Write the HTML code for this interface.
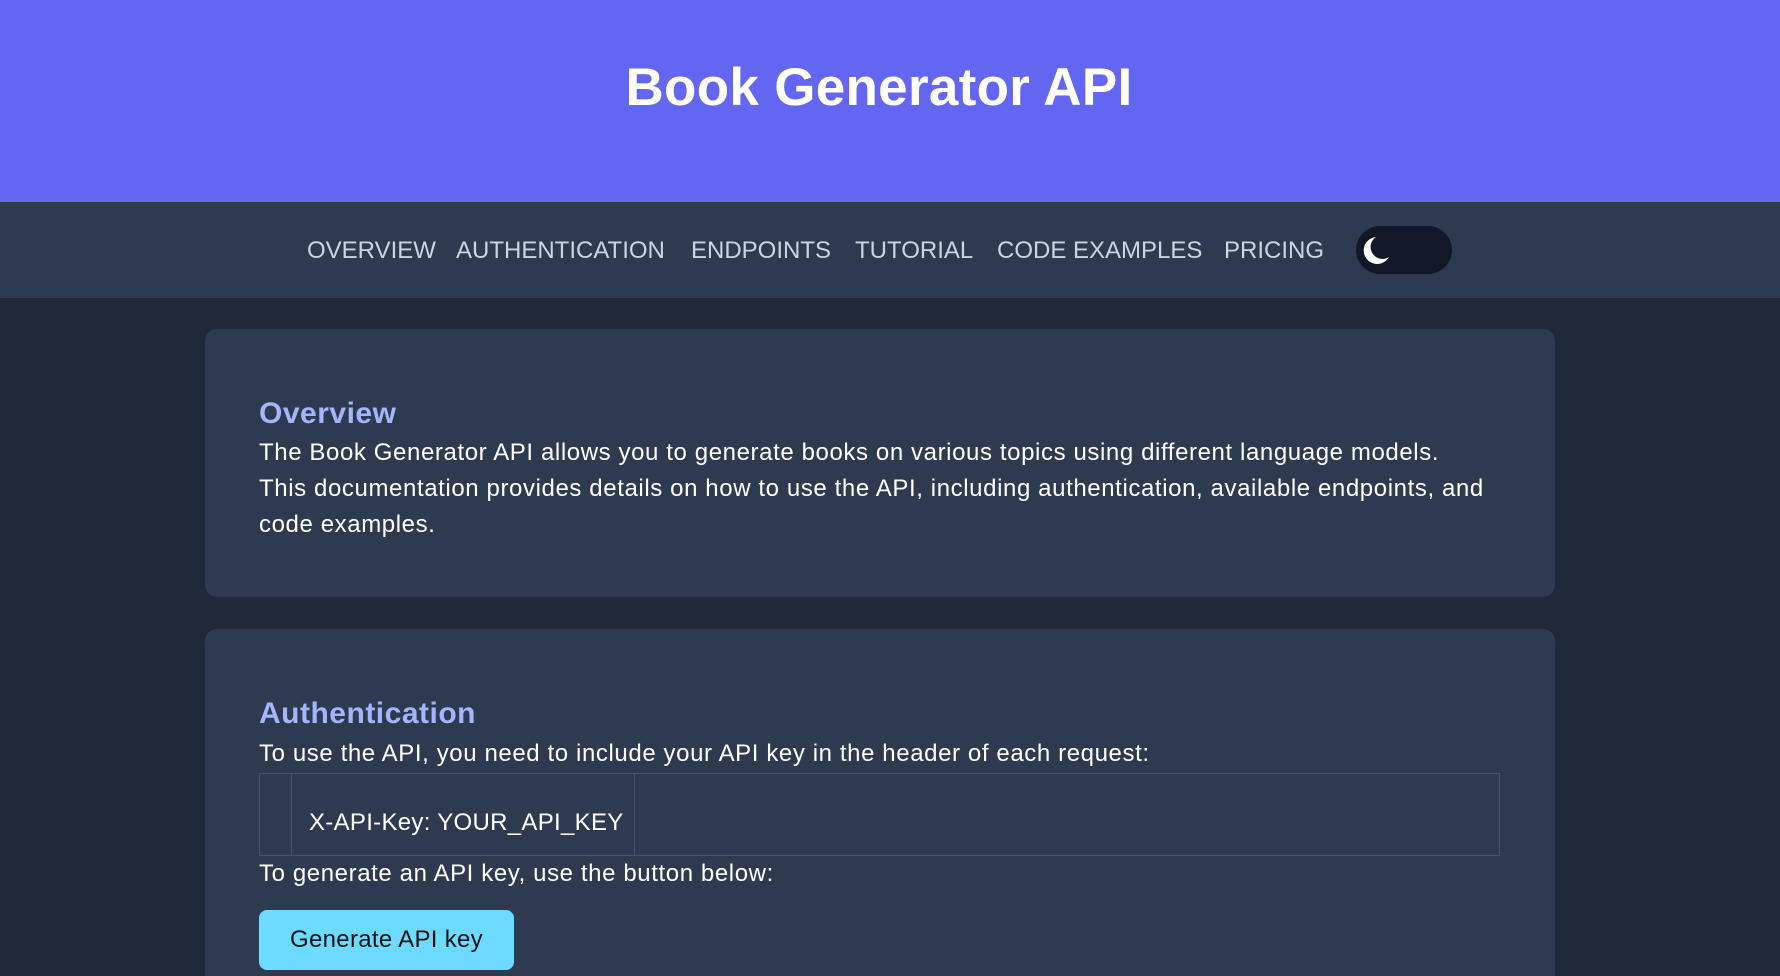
<!DOCTYPE html>
<html><head><meta charset="utf-8"><style>
*{margin:0;padding:0;box-sizing:border-box}
html,body{width:1780px;height:976px;overflow:hidden}
body{background:#1f2937;font-family:"Liberation Sans",sans-serif;color:#fff;position:relative}
header{height:202px;background:#6366f1;position:relative}
header h1{position:absolute;left:0;width:1758px;text-align:center;top:57px;font-size:53px;font-weight:700;letter-spacing:0.3px}
nav{height:96px;background:#2d3a50;position:relative}
nav a{position:absolute;top:35px;font-size:24px;color:#cbd5e1;text-decoration:none;white-space:nowrap}
.tog{position:absolute;left:1356px;top:24px;width:96px;height:48px;border-radius:24px;background:#111827}
.card{position:absolute;left:205px;width:1350px;background:#2d3a50;border-radius:12px;overflow:hidden}
h2{color:#a5b4fc;font-size:30px;font-weight:700;position:absolute;left:54px;letter-spacing:0.5px}
p{font-size:24px;line-height:36px;position:absolute;left:54px;width:1250px;letter-spacing:0.6px;white-space:nowrap}
.code{position:absolute;left:54px;top:144px;width:1241px;height:83px;border:1px solid #46536a}
.pre{position:absolute;left:31px;top:0;width:344px;height:81px;border-left:1px solid #46536a;border-right:1px solid #46536a;font-size:24px;padding:35px 0 0 17px;letter-spacing:0.3px}
.btn{position:absolute;left:54px;top:281px;width:255px;height:60px;border-radius:8px;background:#6ddbff;color:#111;font-size:24px;line-height:60px;text-align:center;letter-spacing:0.3px}
</style></head><body>
<header><h1>Book Generator API</h1></header>
<nav>
<a style="left:307px">OVERVIEW</a>
<a style="left:456px">AUTHENTICATION</a>
<a style="left:691px">ENDPOINTS</a>
<a style="left:855px">TUTORIAL</a>
<a style="left:997px">CODE EXAMPLES</a>
<a style="left:1224px">PRICING</a>
<div class="tog"><svg width="48" height="48" viewBox="0 0 48 48" style="position:absolute;left:-2px;top:0"><path d="M22 11 A13.5 13.5 0 1 0 35 31 A11.5 11.5 0 0 1 22 11Z" fill="#fff"/></svg></div>
</nav>
<div class="card" style="top:329px;height:268px">
<h2 style="top:68px">Overview</h2>
<p style="top:106px">The Book Generator API allows you to generate books on various topics using different language models.<br>This documentation provides details on how to use the API, including authentication, available endpoints, and<br>code examples.</p>
</div>
<div class="card" style="top:629px;height:360px">
<h2 style="top:68px">Authentication</h2>
<p style="top:107px">To use the API, you need to include your API key in the header of each request:</p>
<div class="code"><div class="pre">X-API-Key: YOUR_API_KEY</div></div>
<p style="top:227px">To generate an API key, use the button below:</p>
<div class="btn">Generate API key</div>
</div>
</body></html>
